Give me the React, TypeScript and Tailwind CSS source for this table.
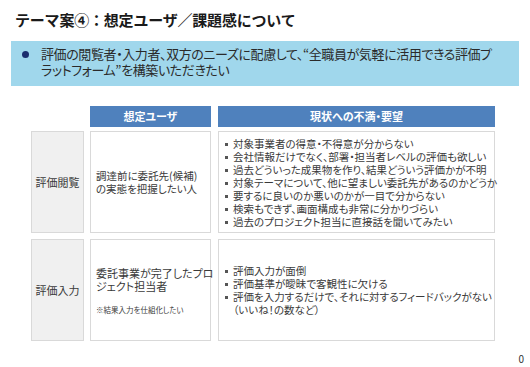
import React from "react";

const font = { fontFamily: '"Noto Sans CJK JP", "Noto Sans", sans-serif' };

function Dot({ top }: { top: string }) {
  return <span className={`inline-block h-[3px] w-[3px] shrink-0 bg-[#555] ${top}`} />;
}

function List({ items, leading, top }: { items: string[][]; leading: string; top: string }) {
  return (
    <div className={`flex flex-col ${leading}`}>
      {items.map((lines, i) => (
        <div key={i} className="flex items-start gap-[5px]">
          <Dot top={top} />
          <div className="flex flex-col">
            {lines.map((l, j) => (
              <span key={j} className="whitespace-nowrap">{l}</span>
            ))}
          </div>
        </div>
      ))}
    </div>
  );
}

export default function App() {
  return (
    <div
      className="relative flex h-[367px] w-[530px] flex-col overflow-hidden bg-white text-[#3a3a3a] [font-feature-settings:'palt']"
      style={font}
    >
      <div className="pl-[15px] pt-[10px] text-[15px] font-bold leading-[20px] tracking-[-0.2px] text-[#1a1a1a] [font-feature-settings:normal]">
        テーマ案④：想定ユーザ／課題感について
      </div>

      <div className="mx-[11px] mt-[11px] flex h-[45px] items-start bg-[#a0d7ec] pl-[11px] pt-[5px]">
        <span className="mt-[5px] inline-block h-[7px] w-[7px] shrink-0 rounded-full bg-[#1b2e6e]" />
        <div className="ml-[12px] flex flex-col text-[13px] leading-[16px] tracking-[-0.4px] text-[#2a2a2a]">
          <span className="whitespace-nowrap">
            評価の閲覧者・入力者、双方のニーズに配慮して、“全職員が気軽に活用できる評価プ
          </span>
          <span className="whitespace-nowrap">ラットフォーム”を構築いただきたい</span>
        </div>
      </div>

      <div className="ml-[31px] mt-[20px] flex flex-col">
        <div className="flex h-[21px]">
          <div className="w-[53px]" />
          <div className="ml-[6px] flex w-[121px] items-center justify-center bg-[#4f81bd] text-[11px] font-bold text-white">
            想定ユーザ
          </div>
          <div className="ml-[7px] flex w-[277px] items-center justify-center bg-[#4f81bd] text-[11px] font-bold text-white">
            現状への不満・要望
          </div>
        </div>

        <div className="mt-[4px] flex h-[102px]">
          <div className="flex w-[53px] items-center justify-center border border-[#d9d9d9] bg-[#f0f0f0] text-[11px]">
            評価閲覧
          </div>
          <div className="ml-[6px] flex w-[121px] flex-col justify-center border border-[#d9d9d9] pl-[5px] text-[10.5px] leading-[13px]">
            <span className="whitespace-nowrap">調達前に委託先(候補)</span>
            <span className="whitespace-nowrap">の実態を把握したい人</span>
          </div>
          <div className="ml-[7px] flex w-[277px] flex-col justify-center border border-[#d9d9d9] pl-[6px] text-[10.5px]">
            <List
              leading="leading-[13px]"
              top="mt-[6px]"
              items={[
                ["対象事業者の得意・不得意が分からない"],
                ["会社情報だけでなく、部署・担当者レベルの評価も欲しい"],
                ["過去どういった成果物を作り、結果どういう評価かが不明"],
                ["対象テーマについて、他に望ましい委託先があるのかどうか"],
                ["要するに良いのか悪いのかが一目で分からない"],
                ["検索もできず、画面構成も非常に分かりづらい"],
                ["過去のプロジェクト担当に直接話を聞いてみたい"],
              ]}
            />
          </div>
        </div>

        <div className="mt-[6px] flex h-[102px]">
          <div className="flex w-[53px] items-center justify-center border border-[#d9d9d9] bg-[#f0f0f0] text-[11px]">
            評価入力
          </div>
          <div className="ml-[6px] flex w-[121px] flex-col justify-center border border-[#d9d9d9] pl-[5px] pt-[2px]">
            <span className="whitespace-nowrap text-[11px] leading-[13px]">委託事業が完了したプロ</span>
            <span className="whitespace-nowrap text-[11px] leading-[13px]">ジェクト担当者</span>
            <span className="mt-[12px] whitespace-nowrap text-[7.5px] leading-[10px]">※結果入力を仕組化したい</span>
          </div>
          <div className="ml-[7px] flex w-[277px] flex-col justify-center border border-[#d9d9d9] pl-[6px] text-[10.5px]">
            <List
              leading="leading-[13px]"
              top="mt-[6px]"
              items={[
                ["評価入力が面倒"],
                ["評価基準が曖昧で客観性に欠ける"],
                ["評価を入力するだけで、それに対するフィードバックがない", "（いいね！の数など）"],
              ]}
            />
          </div>
        </div>
      </div>

      <div className="mt-[12px] flex justify-end pr-[6px] text-[10px] leading-[12px] text-[#333]">
        0
      </div>
    </div>
  );
}
